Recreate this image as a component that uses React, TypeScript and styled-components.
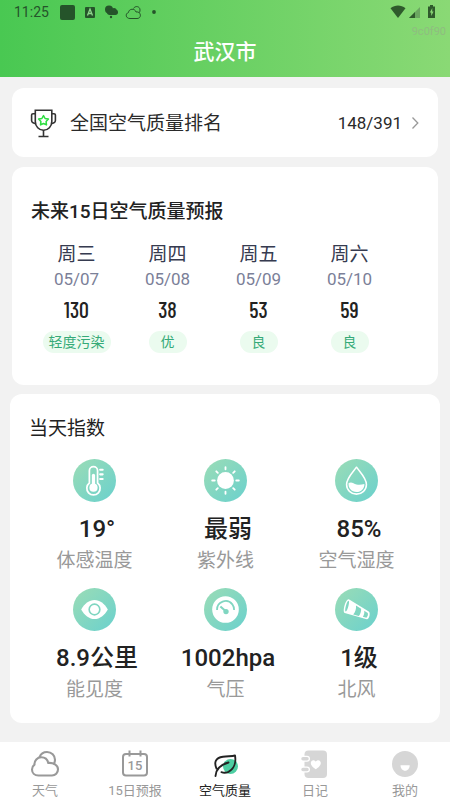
import React from "react";
import styled, { createGlobalStyle } from "styled-components";

const GlobalStyle = createGlobalStyle`
  * { box-sizing: border-box; }
  body {
    margin: 0;
    background: #f2f2f2;
    color: #222;
    font-family: Roboto, "Noto Sans CJK SC", sans-serif;
  }
  h1, h2, p, dl, dt, dd, ul { margin: 0; padding: 0; font-weight: 400; }
  svg { display: block; flex: none; }
`;

const Page = styled.div`
  min-height: 100vh;
  display: flex;
  flex-direction: column;
`;

const Header = styled.header`
  position: relative;
  background: linear-gradient(90deg, #49c852, #8ad975);
`;

const StatusBar = styled.div`
  display: flex;
  align-items: center;
  justify-content: space-between;
  height: 24px;
  padding: 0 14px;
  color: #25542a;
`;

const StatusGroup = styled.div<{ $gap: number }>`
  display: flex;
  align-items: center;
  gap: ${(p) => p.$gap}px;
`;

const Clock = styled.span`
  font-size: 14px;
  line-height: 24px;
`;

const BuildTag = styled.span`
  position: absolute;
  top: 26px;
  right: 4px;
  font-size: 11px;
  line-height: 12px;
  color: #8fbd80;
`;

const City = styled.h1`
  padding: 14px 0 11px;
  font-size: 21px;
  line-height: 28px;
  font-weight: 500;
  text-align: center;
  color: #fff;
`;

const Content = styled.main`
  flex: 1;
  padding: 11px 12px 19px;
`;

const RankLink = styled.a`
  display: flex;
  align-items: center;
  height: 69px;
  padding: 0 18px;
  border-radius: 12px;
  background: #fff;
  color: #2a2a2a;
  text-decoration: none;
`;

const RankLabel = styled.span`
  flex: 1;
  margin-left: 12px;
  padding-top: 3px;
  font-size: 19px;
  line-height: 28px;
`;

const RankValue = styled.span`
  margin-right: 9px;
  font-size: 17px;
  line-height: 28px;
`;

const ForecastCard = styled.section`
  margin-top: 10px;
  padding: 31px 19px 32px;
  border-radius: 12px;
  background: #fff;
`;

const ForecastTitle = styled.h2`
  font-size: 19px;
  line-height: 28px;
  font-weight: 500;
`;

const Days = styled.ul`
  display: grid;
  grid-template-columns: repeat(4, 1fr);
  margin-top: 15px;
  margin-right: 24px;
  list-style: none;
`;

const Day = styled.li`
  display: flex;
  flex-direction: column;
  align-items: center;
`;

const Weekday = styled.span`
  font-size: 19px;
  line-height: 28px;
  color: #363b50;
`;

const DayDate = styled.span`
  font-size: 17px;
  line-height: 20px;
  color: #7b8098;
`;

const Aqi = styled.span`
  margin-top: 6px;
  font-family: "Barlow Condensed", "Roboto Condensed", "Noto Sans Condensed", "Open Sans Condensed", "DIN Condensed", Roboto, sans-serif;
  font-size: 22px;
  line-height: 28px;
  font-weight: 500;
`;

const Grade = styled.span`
  min-width: 38px;
  margin-top: 8px;
  padding: 0 6px;
  border-radius: 11px;
  background: #ebfbef;
  color: #35aa78;
  font-size: 14px;
  line-height: 22px;
  text-align: center;
`;

const IndexCard = styled.section`
  margin: 9px -2px 0;
  padding: 21px 18px 19px 19px;
  border-radius: 12px;
  background: #fff;
`;

const IndexTitle = styled.h2`
  font-size: 19px;
  line-height: 28px;
`;

const IndexGrid = styled.dl`
  display: grid;
  grid-template-columns: repeat(3, 1fr);
  row-gap: 13px;
  margin-top: 16px;
`;

const IndexItem = styled.div`
  display: flex;
  flex-direction: column;
  align-items: center;
`;

const IndexValue = styled.dd`
  margin-top: 10px;
  padding-left: 5px;
  font-size: 24px;
  line-height: 34px;
  font-weight: 500;
  white-space: nowrap;
`;

const IndexName = styled.dt`
  order: 3;
  margin-top: 1px;
  font-size: 19px;
  line-height: 28px;
  color: #999;
`;

const TabBar = styled.nav`
  display: grid;
  grid-template-columns: repeat(5, 1fr);
  background: #fff;
`;

const Tab = styled.button<{ $active?: boolean }>`
  display: flex;
  flex-direction: column;
  align-items: center;
  gap: 2px;
  padding: 7px 0 0;
  border: 0;
  background: none;
  color: ${(p) => (p.$active ? "#222" : "#999")};
  font-family: inherit;
  font-size: 13px;
  line-height: 20px;
  cursor: pointer;
`;

const TabIcon = styled.svg`
  width: 30px;
  height: 30px;
`;

const cloudBack = "M9.5 8.3C10.6 5.2 13.5 3 17 3c4.600 0 8 3.500 8 7.800 0 1.800-.5 3.200-1.500 4.500";
const cloudFront =
  "M8.500 26.500C4.500 26.500 2 23.700 2 20.500c0-2 1-3.800 2.500-4.900C4.200 11.500 7.300 8.300 11.300 8.300c3.600 0 6.200 2.300 7 5.600 5-.4 9.700 2 9.700 6.300 0 3.700-2.700 6.300-6 6.300z";

const StatusIcons = () => (
  <svg width="98" height="18" viewBox="58 3 98 18" aria-hidden="true">
    <rect x="60" y="5" width="15" height="15" rx="2" fill="#25542a" />
    <rect x="85" y="7" width="10" height="11" rx="1" fill="#25542a" />
    <path d="M87.500 15.500 90 9l2.500 6.500M88.500 13.500h3" fill="none" stroke="#8fd88d" strokeWidth="1.300" />
    <circle cx="109" cy="9.500" r="4" fill="#25542a" />
    <rect x="107" y="9.500" width="11" height="5.500" rx="2.700" fill="#25542a" />
    <circle cx="114" cy="10.500" r="2.600" fill="#25542a" />
    <circle cx="111" cy="17" r="1.200" fill="#25542a" />
    <path d="M130 18.500c-4.500 0-5-5-1.500-6 .2-4 6.500-4.500 7.500-.5 5-1 6.200 6.500 1 6.500zM133.500 8.500c1.500-3 6.500-2.500 6.500 1.500 0 1.500-.5 2.500-1 3" fill="none" stroke="#25542a" />
    <circle cx="154" cy="12" r="1.900" fill="#25542a" />
  </svg>
);

const SystemIcons = () => (
  <svg width="46" height="16" viewBox="390 4 46 16" aria-hidden="true">
    <path d="M390.500 8.300c4.500-3.600 10.500-3.600 15 0L398 18z" fill="#2f5a2c" />
    <path d="M420 7v11h-11z" fill="#6ba661" />
    <path d="M415 12v6h-6z" fill="#2f5a2c" />
    <path d="M430 5h3v1.500h2V18h-7V6.500h2z" fill="#2f5a2c" />
    <path d="m432.300 8-2.500 4.500h1.400V16l2.400-4.500h-1.400z" fill="#8ad975" />
  </svg>
);

const Trophy = () => (
  <svg width="28" height="30" viewBox="0 0 28 30" fill="none" stroke="#333" strokeWidth="1.600" aria-hidden="true">
    <path d="M5.300 2.200h16.500v11.300c0 5-3.700 8.700-8.250 8.700S5.300 18.500 5.300 13.500z" />
    <path d="M5 5.800H3c-.9 0-1.400.5-1.400 1.300v5.400c0 1.200.4 1.800 1.400 2.200l2.600 1M22 5.800h2c.9 0 1.400.5 1.400 1.300v5.400c0 1.200-.4 1.800-1.400 2.200l-2.600 1" />
    <path d="M13.500 22v6M8.500 28.500h10" />
    <path d="m13.500 7.600 1.600 2.900 3.300.6-2.300 2.500.4 3.300-3-1.400-3 1.400.4-3.300-2.300-2.500 3.300-.6z" stroke="#2ddd40" strokeWidth="1.500" strokeLinejoin="round" />
  </svg>
);

const Chevron = () => (
  <svg width="9" height="14" viewBox="0 0 9 14" aria-hidden="true">
    <path d="m1.500 1.500 5.300 5.500-5.300 5.500" fill="none" stroke="#999" strokeWidth="1.300" />
  </svg>
);

const Disc = ({ id, children }: { id: string; children: React.ReactNode }) => (
  <svg width="43" height="43" viewBox="0 0 42 42" aria-hidden="true">
    <defs>
      <linearGradient id={id} x1="0.100" y1="0.100" x2="0.900" y2="0.900">
        <stop offset="0" stopColor="#96dbb8" />
        <stop offset="1" stopColor="#6fd2cb" />
      </linearGradient>
    </defs>
    <circle cx="21" cy="21" r="21" fill={`url(#${id})`} />
    {children}
  </svg>
);

const Thermometer = () => (
  <Disc id="temp">
    <path d="M16 23.500V11.500a4 4 0 0 1 8 0v12a6.500 6.500 0 1 1-8 0z" fill="none" stroke="#fff" strokeWidth="1.700" />
    <path d="M20 16v12" stroke="#fff" strokeWidth="3.200" strokeLinecap="round" />
    <circle cx="20" cy="28" r="4" fill="#fff" />
    <path d="M26.500 10.500H29M26.500 15H29M26.500 19.500H29" stroke="#fff" strokeWidth="2" strokeLinecap="round" />
  </Disc>
);

const Sun = () => (
  <Disc id="uv">
    <circle cx="21" cy="21" r="8.200" fill="#fff" />
    <path
      d="M21 8v2M21 32v2M8 21h2.500M31.500 21H34M12 12l1.500 1.500M28.500 28.500 30 30M30 12l-1.500 1.500M13.500 28.500 12 30"
      stroke="#fff" strokeWidth="1.800" strokeLinecap="round"
    />
  </Disc>
);

const Drop = () => (
  <Disc id="humidity">
    <path d="M21 8c3 4.500 9.700 10.500 9.700 17a9.700 9.300 0 0 1-19.400 0C11.300 18.500 18 12.500 21 8z" fill="none" stroke="#fff" strokeWidth="1.500" strokeLinejoin="round" />
    <path d="M13.300 23.500c3-1.800 4.700.6 7.700 1.300 2.500.6 5 .3 7.700-.4.300 4.300-3.200 7.900-7.700 7.900-4.800 0-8.400-4-7.700-8.800z" fill="#fff" />
  </Disc>
);

const Eye = () => (
  <Disc id="visibility">
    <path d="M8 21c3-5.500 8-9.200 13-9.200S31 15.500 34 21c-3 5.500-8 9.400-13 9.400S11 26.500 8 21z" fill="#fff" />
    <circle cx="21" cy="21" r="5.200" fill="none" stroke="#80d6c1" strokeWidth="1.600" />
  </Disc>
);

const Gauge = () => (
  <Disc id="pressure">
    <circle cx="21" cy="21" r="13" fill="#fff" />
    <path d="M12.700 21.500a8.400 8.400 0 0 1 15-5.500 8.400 8.400 0 0 1 1.700 5.500" fill="none" stroke="#80d6c1" strokeWidth="1.700" />
    <path d="m16 18 4.500 4" stroke="#80d6c1" strokeWidth="2" />
    <circle cx="21.500" cy="23" r="2.600" fill="#80d6c1" />
  </Disc>
);

const Windsock = () => (
  <Disc id="wind">
    <path d="M13.500 11 33 23c2 1.500.2 8-2 7.500L9.500 24.500c-2.700-1 .8-14 4-13.500z" fill="#fff" />
    <path d="M13.200 12.500c1.600.2-.8 10-2.800 10.500-1.300-.3.900-10 2.800-10.500zM20.500 17l5 3.200c.3 2.200-.7 5.300-2.200 7.200l-5.500-1.600c2.200-2.300 3-5.700 2.700-8.800zM28.500 22.300l3.500 2.200c.5 1.500 0 3.300-1.300 4.500l-3.500-1c1.300-1.600 1.700-3.700 1.300-5.700z" fill="#80d6c1" />
  </Disc>
);

const CloudTab = () => (
  <TabIcon viewBox="0 0 30 30" fill="none" stroke="#999" strokeWidth="2.100" aria-hidden="true">
    <path d={cloudBack} />
    <path d={cloudFront} />
  </TabIcon>
);

const CalendarTab = () => (
  <TabIcon viewBox="0 0 30 30" aria-hidden="true">
    <rect x="3" y="5" width="24" height="21.500" rx="3" fill="none" stroke="#999" strokeWidth="2" />
    <path d="M9.500 1.500v6M20.500 1.500v6" stroke="#999" strokeWidth="2" />
    <text x="15" y="21" textAnchor="middle" fontSize="13" fontWeight="500" fill="#999">15</text>
  </TabIcon>
);

const LeafTab = () => (
  <TabIcon viewBox="0 0 30 30" aria-hidden="true">
    <circle cx="20.500" cy="17.500" r="7.500" fill="#4dcea2" />
    <path
      d="M6.500 19.500C4 14 5 8.700 13 7.700c5-.7 9-.2 12-1.200 1.200 7-1 13.500-6.500 16.300-2.500 1.200-5 1.200-7 .4M5.500 27c.5-7 5-11.500 13-13.500"
      fill="none" stroke="#222" strokeWidth="1.900" strokeLinecap="round" strokeLinejoin="round"
    />
  </TabIcon>
);

const DiaryTab = () => (
  <TabIcon viewBox="0 0 30 30" aria-hidden="true">
    <rect x="4.500" y="1.500" width="22.500" height="27.500" rx="4" fill="#d6d6d6" />
    <g fill="none" strokeLinecap="round">
      <path d="M2.500 9.700H7M2.500 20.500H7" stroke="#fff" strokeWidth="6" />
      <path d="M3 9.700H7M3 20.500H7" stroke="#d6d6d6" strokeWidth="3.500" />
    </g>
    <path d="M15.800 20.300c-2-1.500-5-3.500-5-6.300 0-3 3.500-4 5-1.300 1.500-2.700 5-1.700 5 1.300 0 2.800-3 4.800-5 6.300z" fill="#fff" />
  </TabIcon>
);

const FaceTab = () => (
  <TabIcon viewBox="0 0 30 30" aria-hidden="true">
    <circle cx="15" cy="15" r="13" fill="#d6d6d6" />
    <path d="M10.500 16.300h9.200c0 3-2 5.500-4.600 5.500s-4.600-2.500-4.600-5.500z" fill="#fff" />
  </TabIcon>
);

const days = [
  { weekday: "周三", date: "05/07", aqi: 130, grade: "轻度污染" },
  { weekday: "周四", date: "05/08", aqi: 38, grade: "优" },
  { weekday: "周五", date: "05/09", aqi: 53, grade: "良" },
  { weekday: "周六", date: "05/10", aqi: 59, grade: "良" },
];

const indices = [
  { name: "体感温度", value: "19°", Icon: Thermometer },
  { name: "紫外线", value: "最弱", Icon: Sun },
  { name: "空气湿度", value: "85%", Icon: Drop },
  { name: "能见度", value: "8.9公里", Icon: Eye },
  { name: "气压", value: "1002hpa", Icon: Gauge },
  { name: "北风", value: "1级", Icon: Windsock },
];

const tabs = [
  { label: "天气", Icon: CloudTab },
  { label: "15日预报", Icon: CalendarTab },
  { label: "空气质量", Icon: LeafTab, active: true },
  { label: "日记", Icon: DiaryTab },
  { label: "我的", Icon: FaceTab },
];

export default function App() {
  return (
    <Page>
      <GlobalStyle />
      <Header>
        <StatusBar>
          <StatusGroup $gap={9}>
            <Clock>11:25</Clock>
            <StatusIcons />
          </StatusGroup>
          <SystemIcons />
        </StatusBar>
        <BuildTag>9c0f90</BuildTag>
        <City>武汉市</City>
      </Header>
      <Content>
        <RankLink href="#ranking">
          <Trophy />
          <RankLabel>全国空气质量排名</RankLabel>
          <RankValue>148/391</RankValue>
          <Chevron />
        </RankLink>
        <ForecastCard>
          <ForecastTitle>未来15日空气质量预报</ForecastTitle>
          <Days>
            {days.map((d) => (
              <Day key={d.date}>
                <Weekday>{d.weekday}</Weekday>
                <DayDate>{d.date}</DayDate>
                <Aqi>{d.aqi}</Aqi>
                <Grade>{d.grade}</Grade>
              </Day>
            ))}
          </Days>
        </ForecastCard>
        <IndexCard>
          <IndexTitle>当天指数</IndexTitle>
          <IndexGrid>
            {indices.map(({ name, value, Icon }) => (
              <IndexItem key={name}>
                <Icon />
                <IndexName>{name}</IndexName>
                <IndexValue>{value}</IndexValue>
              </IndexItem>
            ))}
          </IndexGrid>
        </IndexCard>
      </Content>
      <TabBar>
        {tabs.map(({ label, Icon, active }) => (
          <Tab key={label} type="button" $active={active} aria-current={active ? "page" : undefined}>
            <Icon />
            {label}
          </Tab>
        ))}
      </TabBar>
    </Page>
  );
}
